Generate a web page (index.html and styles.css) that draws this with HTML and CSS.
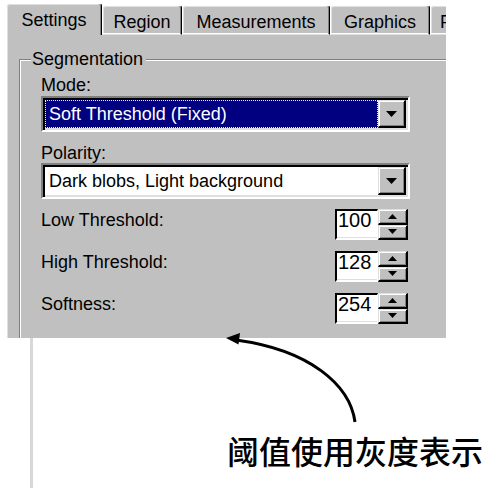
FILE: index.html
```html
<!DOCTYPE html>
<html>
<head>
<meta charset="utf-8">
<link rel="stylesheet" href="styles.css">
</head>
<body>
<div class="page">
  <div class="dialog">
    <div class="tabs">
      <div class="tab tab-active tab-settings">Settings</div>
      <div class="tab tab-region">Region</div>
      <div class="tab tab-meas">Measurements</div>
      <div class="tab tab-graph">Graphics</div>
      <div class="tab tab-more">F</div>
    </div>
    <div class="panel">
      <fieldset class="group">
        <legend>Segmentation</legend>
        <div class="group-body">
          <div class="field-label label-mode">Mode:</div>
          <div class="combo combo-mode">
            <div class="combo-value selected">Soft Threshold (Fixed)</div>
            <div class="btn combo-btn"><svg width="11" height="6" viewBox="0 0 11 6"><path d="M0 0H11L5.5 6Z"/></svg></div>
          </div>
          <div class="field-label label-polarity">Polarity:</div>
          <div class="combo combo-polarity">
            <div class="combo-value">Dark blobs, Light background</div>
            <div class="btn combo-btn"><svg width="11" height="6" viewBox="0 0 11 6"><path d="M0 0H11L5.5 6Z"/></svg></div>
          </div>
          <div class="spin-row first-row">
            <div class="row-label">Low Threshold:</div>
            <div class="spin">
              <div class="spin-edit">100</div>
              <div class="spin-btns">
                <div class="btn spin-btn"><svg width="9" height="5" viewBox="0 0 9 5"><path d="M0 5H9L4.5 0Z"/></svg></div>
                <div class="btn spin-btn"><svg width="9" height="5" viewBox="0 0 9 5"><path d="M0 0H9L4.5 5Z"/></svg></div>
              </div>
            </div>
          </div>
          <div class="spin-row">
            <div class="row-label">High Threshold:</div>
            <div class="spin">
              <div class="spin-edit">128</div>
              <div class="spin-btns">
                <div class="btn spin-btn"><svg width="9" height="5" viewBox="0 0 9 5"><path d="M0 5H9L4.5 0Z"/></svg></div>
                <div class="btn spin-btn"><svg width="9" height="5" viewBox="0 0 9 5"><path d="M0 0H9L4.5 5Z"/></svg></div>
              </div>
            </div>
          </div>
          <div class="spin-row">
            <div class="row-label">Softness:</div>
            <div class="spin">
              <div class="spin-edit">254</div>
              <div class="spin-btns">
                <div class="btn spin-btn"><svg width="9" height="5" viewBox="0 0 9 5"><path d="M0 5H9L4.5 0Z"/></svg></div>
                <div class="btn spin-btn"><svg width="9" height="5" viewBox="0 0 9 5"><path d="M0 0H9L4.5 5Z"/></svg></div>
              </div>
            </div>
          </div>
        </div>
      </fieldset>
    </div>
  </div>
  <div class="below">
    <div class="rule"></div>
    <div class="caption">阈值使用灰度表示</div>
  </div>
  <svg class="annot" width="495" height="491" viewBox="0 0 495 491">
    <path d="M355 422 C350 385 310 350 236 340" fill="none" stroke="#000" stroke-width="3"/>
    <path d="M226 338 L240 333 L238.5 344.5 Z" fill="#000"/>
  </svg>
</div>
</body>
</html>
```

FILE: styles.css
```css
html, body {
  margin: 0;
  padding: 0;
  background: #fff;
}

body {
  font-family: "Liberation Sans", Arial, sans-serif;
  font-size: 18px;
  color: #000;
}

.page {
  position: relative;
  width: 495px;
  height: 491px;
  overflow: hidden;
}

.dialog {
  margin: 3px 0 0 6px;
  width: 440px;
  overflow: hidden;
}

/* ---- tabs ---- */
.tabs {
  display: flex;
  align-items: flex-end;
  height: 32px;
}

.tab {
  flex: none;
  box-sizing: border-box;
  height: 30px;
  padding-top: 6px;
  line-height: 20px;
  text-align: center;
  white-space: nowrap;
  background: #c0c0c0;
  border-top: 1px solid #fff;
  border-left: 1px solid #fff;
  border-right: 1px solid #000;
  border-bottom: 1px solid #dfdfdf;
  border-radius: 3px 3px 0 0;
  box-shadow: inset -1px 0 0 #808080, inset 0 -1px 0 #fff, inset 1px 1px 0 #dfdfdf;
}

.tab-active {
  height: 32px;
  border-bottom: none;
  box-shadow: inset -1px 0 0 #808080, inset 1px 1px 0 #dfdfdf;
}

.tab-settings { width: 96px; }
.tab-region { width: 80px; }
.tab-meas { width: 148px; }
.tab-graph { width: 100px; }
.tab-more { width: 60px; text-align: left; padding-left: 9px; }

/* ---- panel ---- */
.panel {
  box-sizing: border-box;
  height: 303px;
  background: #c0c0c0;
  border-left: 1px solid #fff;
  box-shadow: inset 1px 0 0 #dfdfdf;
  padding: 14px 0 0 12px;
  display: flex;
  flex-direction: column;
  overflow: hidden;
}

.group {
  flex: 1;
  margin: 0;
  padding: 0;
  min-width: 0;
  border: none;
  border-top: 1px solid #808080;
  border-left: 1px solid #808080;
  box-shadow: inset 1px 1px 0 #fff;
}

.group legend {
  padding: 0 3px 0 1px;
  margin-left: 11px;
  line-height: 20px;
  background: #c0c0c0;
}

.group-body {
  width: 369px;
  padding-left: 21px;
}

.field-label {
  line-height: 20px;
}

.label-mode { margin-top: 6px; }
.label-polarity { margin-top: 11px; }

/* ---- combo ---- */
.combo {
  box-sizing: border-box;
  height: 36px;
  display: flex;
  padding: 2px;
  background: #fff;
  border: 2px solid;
  border-color: #808080 #fff #fff #808080;
  box-shadow: inset 2px 2px 0 #000, inset -2px -2px 0 #dfdfdf;
}

.combo-mode { margin-top: 1px; }
.combo-polarity { margin-top: 0; }

.combo-value {
  flex: 1;
  box-sizing: border-box;
  padding-left: 3px;
  line-height: 26px;
  border: 1px solid transparent;
  white-space: nowrap;
  overflow: hidden;
}

.combo-value.selected {
  background: #000080;
  color: #fff;
  border: 1px dotted #ffff90;
}

.btn {
  box-sizing: border-box;
  background: #c0c0c0;
  border-style: solid;
  border-width: 1px 2px 2px 1px;
  border-color: #dfdfdf #000 #000 #dfdfdf;
  box-shadow: inset 1px 1px 0 #fff, inset -1px -1px 0 #808080;
  display: flex;
  align-items: center;
  justify-content: center;
}

.btn svg {
  display: block;
  fill: #000;
}

.combo-btn {
  width: 28px;
  height: 28px;
}

/* ---- spin rows ---- */
.spin-row {
  display: flex;
  justify-content: space-between;
  align-items: flex-start;
  height: 30px;
  margin-top: 12px;
}

.spin-row.first-row { margin-top: 10px; }

.row-label {
  line-height: 20px;
  margin-top: 1px;
}

.spin {
  display: flex;
  margin-right: 2px;
}

.spin-edit {
  box-sizing: border-box;
  width: 43px;
  height: 31px;
  padding-left: 1px;
  font-size: 20px;
  line-height: 18px;
  background: #fff;
  border-style: solid;
  border-width: 2px 1px 2px 2px;
  border-color: #000 #fff #fff #000;
  box-shadow: inset 0 -1px 0 #dfdfdf;
}

.spin-btns {
  display: flex;
  flex-direction: column;
  width: 30px;
  height: 31px;
}

.spin-btn {
  flex: 1;
}

/* ---- below ---- */
.below {
  display: flex;
  height: 153px;
}

.rule {
  margin-left: 30px;
  width: 3px;
  height: 150px;
  background: #d8d8d8;
}

.caption {
  margin-left: 194px;
  padding-top: 96px;
  font-family: "Noto Sans CJK SC", "Noto Sans", sans-serif;
  font-size: 32px;
  font-weight: 500;
  line-height: 32px;
  white-space: nowrap;
}

.annot {
  position: absolute;
  left: 0;
  top: 0;
  pointer-events: none;
}
```
